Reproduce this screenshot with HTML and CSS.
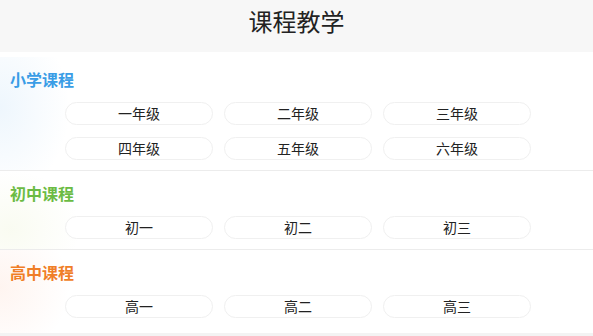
FILE: index.html
```html
<!DOCTYPE html>
<html lang="zh-CN">
<head>
    <meta charset="UTF-8">
    <meta name="viewport" content="width=device-width, initial-scale=1.0">
    <title>课程教学</title>
    <link rel="stylesheet" href="styles.css">
</head>
<body>
    <div class="header">
        <h1 class="page-title">课程教学</h1>
    </div>

    <div class="course-list">
        <div class="course-section primary">
            <div class="section-title">小学课程</div>
            <div class="grade-grid">
                <span class="grade-btn">一年级</span>
                <span class="grade-btn">二年级</span>
                <span class="grade-btn">三年级</span>
                <span class="grade-btn">四年级</span>
                <span class="grade-btn">五年级</span>
                <span class="grade-btn">六年级</span>
            </div>
        </div>

        <div class="course-section junior">
            <div class="section-title">初中课程</div>
            <div class="grade-grid">
                <span class="grade-btn">初一</span>
                <span class="grade-btn">初二</span>
                <span class="grade-btn">初三</span>
            </div>
        </div>

        <div class="course-section senior">
            <div class="section-title">高中课程</div>
            <div class="grade-grid">
                <span class="grade-btn">高一</span>
                <span class="grade-btn">高二</span>
                <span class="grade-btn">高三</span>
            </div>
        </div>
    </div>
</body>
</html>
```

FILE: styles.css
```css
body {
    margin: 0;
    background: #f3f3f3;
    font-family: "Noto Sans CJK SC", "Noto Sans", sans-serif;
    color: #222;
}

.header {
    height: 52px;
    box-sizing: border-box;
    padding-top: 9px;
    background: #f7f7f7;
    text-align: center;
}

.page-title {
    margin: 0;
    font-size: 24px;
    line-height: 24px;
    font-weight: normal;
    color: #222;
}

.course-list {
    background: #fff;
    padding-top: 5px;
}

.course-section {
    padding: 12px 0 10px;
    border-bottom: 1px solid #ececec;
}

.course-section:last-child {
    padding-bottom: 15px;
    border-bottom: none;
}

/* faint colour glow on the left of each block */
.primary {
    background: radial-gradient(ellipse 70px 90px at 0 45%, rgba(90, 170, 235, 0.10), rgba(255, 255, 255, 0));
}

.junior {
    background: radial-gradient(ellipse 70px 60px at 10px 75%, rgba(200, 220, 120, 0.10), rgba(255, 255, 255, 0));
}

.senior {
    background: radial-gradient(ellipse 70px 70px at 0 45%, rgba(250, 150, 110, 0.10), rgba(255, 255, 255, 0));
}

.section-title {
    padding-left: 10px;
    font-size: 16px;
    line-height: 20px;
    font-weight: bold;
}

.primary .section-title {
    color: #3a9de6;
}

.junior .section-title {
    color: #6bbb43;
}

.senior .section-title {
    color: #f07e27;
}

.grade-grid {
    display: grid;
    grid-template-columns: repeat(3, 148px);
    column-gap: 11px;
    row-gap: 12px;
    margin-top: 13px;
    padding-left: 65px;
}

.grade-btn {
    display: block;
    height: 23px;
    box-sizing: border-box;
    border: 1px solid #f0f0f0;
    border-radius: 12px;
    background: #fff;
    text-align: center;
    font-size: 14px;
    line-height: 21px;
    color: #222;
}
```
